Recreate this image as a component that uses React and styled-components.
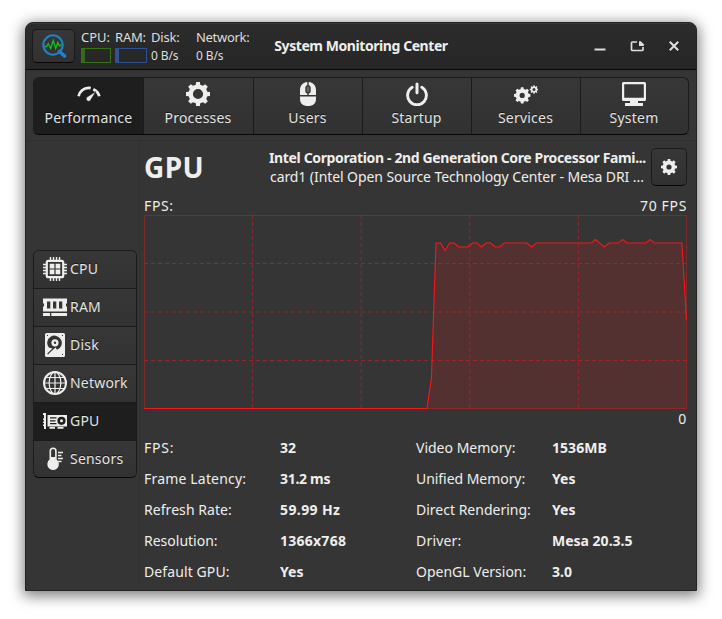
import React from "react";
import styled, { createGlobalStyle } from "styled-components";

const GlobalStyle = createGlobalStyle`
  *, *::before, *::after { box-sizing: border-box; }
  html, body { margin: 0; height: 100%; background: #fff; overflow: hidden; }
  body { font-family: "Noto Sans", sans-serif; font-size: 14px; color: #eeeeec; }
  svg { display: block; flex: none; }
`;

const Desktop = styled.main`
  width: 722px;
  height: 619px;
  padding: 22px 25px 28px;
`;

const Window = styled.section`
  width: 672px;
  height: 569px;
  display: flex;
  flex-direction: column;
  background: #353535;
  border: 1px solid #242424;
  border-radius: 8px 8px 0 0;
  box-shadow: 0 3px 14px 2px rgba(0, 0, 0, 0.5);
  overflow: hidden;
`;

const TitleBar = styled.header`
  height: 47px;
  flex: none;
  display: grid;
  grid-template-columns: 1fr auto 1fr;
  align-items: center;
  background: linear-gradient(#2c2c2c, #262626);
  border-bottom: 1px solid #070707;
  box-shadow: inset 0 1px #393939;
  padding: 0 6px;
`;

const Widgets = styled.div`
  display: flex;
  align-items: center;
`;

const raised = `
  background: linear-gradient(#373737, #313131);
  border: 1px solid #1b1b1b;
  border-bottom-color: #070707;
`;

const RaisedButton = styled.button`
  ${raised}
  border-radius: 5px;
  display: flex;
  align-items: center;
  justify-content: center;
  padding: 0;
  color: #eeeeec;
  width: ${(p) => p.$w}px;
  height: ${(p) => p.$h}px;
  flex: none;
`;

const Meter = styled.div`
  width: ${(p) => p.$w}px;
  margin-left: ${(p) => p.$gap}px;
  height: 36px;
  font-size: 13px;
  line-height: 18px;
  letter-spacing: ${(p) => p.$ls || 0}px;
  white-space: nowrap;
  color: #dededc;
`;

const MeterBar = styled.div`
  height: 15px;
  margin-top: 2px;
  border: 1px solid ${(p) => p.$line};
  background: linear-gradient(90deg, ${(p) => p.$fill} 3px, transparent 3px);
`;

const MeterRate = styled.div`
  font-size: 12px;
  line-height: 20px;
  letter-spacing: -0.1px;
`;

const WindowTitle = styled.h1`
  margin: 0;
  font-size: 14px;
  font-weight: 700;
  letter-spacing: -0.43px;
  line-height: 20px;
`;

const Controls = styled.div`
  display: flex;
  justify-content: flex-end;
  gap: 13px;
  padding-right: 4px;
`;

const ControlButton = styled.button`
  width: 24px;
  height: 24px;
  padding: 4px;
  border: 0;
  background: none;
  color: #dededc;
`;

const Tabs = styled.nav`
  ${raised}
  flex: none;
  height: 58px;
  margin: 7px 7px 0;
  display: grid;
  grid-template-columns: 109px 110px 109px 109px 109px 1fr;
  border-radius: 6px;
  overflow: hidden;
`;

const Tab = styled.button`
  border: 0;
  border-left: 1px solid #1b1b1b;
  background: ${(p) => (p.$active ? "#1e1e1e" : "none")};
  color: #e4e4e2;
  font: inherit;
  line-height: 20px;
  letter-spacing: 0.22px;
  padding: 4px 1px 0 0;
  display: flex;
  flex-direction: column;
  align-items: center;
  justify-content: flex-start;
  gap: 2px;
  text-shadow: 0 -1px rgba(0, 0, 0, 0.6);
  &:first-child { border-left: 0; padding-right: 0; }
`;

const Body = styled.div`
  flex: 1;
  display: flex;
  margin-top: 5px;
  border-top: 1px solid #303030;
`;

const SideColumn = styled.div`
  width: 114px;
  flex: none;
  padding: 109px 2px 0 7px;
  margin: 0 0 7px;
  border-right: 1px solid #303030;
`;

const SideList = styled.nav`
  ${raised}
  border-radius: 6px;
  overflow: hidden;
  display: grid;
  grid-template-rows: 37px repeat(4, 38px) 37px;
`;

const SideItem = styled.button`
  display: flex;
  align-items: center;
  gap: 3px;
  padding: 0 0 1px 9px;
  border: 0;
  border-top: 1px solid #1b1b1b;
  background: ${(p) => (p.$active ? "#1e1e1e" : "linear-gradient(#373737, #323232)")};
  color: #e4e4e2;
  font: inherit;
  letter-spacing: 0.2px;
  line-height: 20px;
  text-shadow: 0 -1px rgba(0, 0, 0, 0.6);
  &:first-child { border-top: 0; }
`;

const Panel = styled.section`
  flex: 1;
  min-width: 0;
  padding: 7px 9px 0 4px;
`;

const PanelHead = styled.div`
  display: flex;
  height: 38px;
  align-items: center;
`;

const Heading = styled.h2`
  margin: 0;
  width: 125px;
  font-size: 28px;
  line-height: 38px;
  letter-spacing: 0.4px;
`;

const Device = styled.div`
  width: 378px;
  margin-right: 4px;
  white-space: nowrap;
  line-height: 19px;
`;

const DeviceName = styled.div`
  font-weight: 700;
  letter-spacing: -0.36px;
`;

const DeviceCard = styled.div`
  letter-spacing: -0.08px;
  padding-left: 1px;
`;

const ChartCaption = styled.div`
  display: flex;
  justify-content: ${(p) => (p.$end ? "flex-end" : "space-between")};
  line-height: 19px;
  letter-spacing: 0.65px;
  margin-top: ${(p) => (p.$end ? 0 : 10)}px;
`;

const Stats = styled.dl`
  margin: 4px 0 0;
  display: grid;
  grid-template-columns: 136px 136px 136px 1fr;
  grid-auto-rows: 31px;
  align-items: center;
  line-height: 20px;
  white-space: nowrap;
`;

const StatName = styled.dt`
  letter-spacing: ${(p) => p.$ls}px;
`;

const StatValue = styled.dd`
  margin: 0;
  font-weight: 700;
  letter-spacing: ${(p) => p.$ls}px;
`;

/* ---------- icons ---------- */

function gearPath(cx, cy, outer, inner, hole, teeth = 8) {
  const step = (Math.PI * 2) / teeth;
  const pt = (r, a) => `${(cx + r * Math.cos(a)).toFixed(2)} ${(cy + r * Math.sin(a)).toFixed(2)}`;
  let d = "";
  for (let i = 0; i < teeth; i++) {
    const a = i * step;
    d += `${i ? "L" : "M"}${pt(inner, a - step * 0.3)}L${pt(outer, a - step * 0.2)}L${pt(outer, a + step * 0.2)}L${pt(inner, a + step * 0.3)}`;
  }
  return `${d}ZM${cx + hole} ${cy}a${hole} ${hole} 0 1 0 ${-2 * hole} 0a${hole} ${hole} 0 1 0 ${2 * hole} 0Z`;
}

const Icon = ({ size = 24, box = 24, children }) => (
  <svg width={size} height={size} viewBox={`0 0 ${box} ${box}`} fill="none" stroke="none">
    {children}
  </svg>
);
const C = "#eeeeec";

const LogoIcon = () => (
  <Icon size={26} box={26}>
    <path d="M18.5 18.500L23.500 23" stroke="#2581c4" strokeWidth="3.600" strokeLinecap="round" />
    <circle cx="12" cy="12" r="9.700" stroke="#1f80c5" strokeWidth="2.100" />
    <path d="M3.500 13.500H5.500L7.300 10.500 9.700 15.500 12.200 7.500 14.700 15.500 16.800 9.500 18.500 13 20.500 11.500" stroke="#0fc024" strokeWidth="1.300" />
  </Icon>
);
const GaugeIcon = () => (
  <Icon>
    <path d="M1.600 14.200C2.500 9.300 6.800 5.900 11.500 5.900c.8 0 1.500.1 2.200.3M16.300 7.200c3.200 1.500 5.300 4 6 7" stroke={C} strokeWidth="2.800" />
    <path d="M18.900 9.500L13.800 17.800a2.400 2.400 0 1 1-3.700-2.800Z" fill={C} stroke="#1e1e1e" strokeWidth=".6" />
  </Icon>
);
const GearIcon = () => (
  <Icon><path fillRule="evenodd" fill={C} d={gearPath(12, 12, 12.2, 9.6, 5.1)} /></Icon>
);
const SmallGearIcon = () => (
  <Icon size={16} box={16}><path fillRule="evenodd" fill={C} d={gearPath(8, 8, 8.2, 6.4, 2.6)} /></Icon>
);
const MouseIcon = () => (
  <Icon>
    <path fill={C} d="M11.300 0v3.300C10 3.600 9.300 4.500 9.300 6v3c0 1.500.7 2.200 2 2.500V13H4V8C4 3.500 7 .3 11.300 0ZM12.700 0C17 .3 20 3.500 20 8v5h-7.300v-1.500c1.300-.3 2-1 2-2.500V6c0-1.500-.7-2.400-2-2.700ZM4 14.500h16V17c0 4.500-3 7-8 7s-8-2.500-8-7Z" />
    <rect x="10.600" y="4.400" width="2.800" height="5.800" rx="1.400" fill={C} opacity=".25" />
  </Icon>
);
const PowerIcon = () => (
  <Icon>
    <path d="M7.200 5.300A9.400 9.400 0 1 0 16.800 5.300" stroke={C} strokeWidth="2.900" strokeLinecap="round" />
    <path d="M12 2v8.800" stroke={C} strokeWidth="3" strokeLinecap="round" />
  </Icon>
);
const GearsIcon = () => (
  <Icon>
    <path fillRule="evenodd" fill={C} d={gearPath(8.2, 13.4, 8.3, 6.6, 2.6)} />
    <path fillRule="evenodd" fill={C} d={gearPath(20, 7.5, 4.3, 3.2, 1.5)} />
  </Icon>
);
const ScreenIcon = () => (
  <Icon>
    <path fillRule="evenodd" fill={C} d="M1.500 0h21A1.500 1.500 0 0 1 24 1.500v16a1.500 1.500 0 0 1-1.500 1.500H16v2h5v3H3v-3h5v-2H1.500A1.500 1.500 0 0 1 0 17.500v-16A1.500 1.500 0 0 1 1.500 0ZM2.200 2.200v13.600h19.600V2.200Z" />
  </Icon>
);
const ChipIcon = () => (
  <Icon>
    <path d="M7.500 0v24M10.500 0v24M13.500 0v24M16.500 0v24M0 7.500h24M0 10.500h24M0 13.500h24M0 16.500h24" stroke={C} strokeWidth="1.400" />
    <rect x="3.800" y="3.800" width="16.400" height="16.400" rx="1.500" fill="#343434" stroke={C} strokeWidth="2.200" />
    <path fill={C} d="M6.700 6.700h4.700v4.700H6.700ZM12.600 6.700h4.700v4.700h-4.700ZM6.700 12.600h4.700v4.700H6.700ZM12.600 12.600h4.700v4.700h-4.700Z" />
  </Icon>
);
const RamIcon = () => (
  <Icon>
    <path fillRule="evenodd" fill={C} d="M0 3.500h24V8l-1 1v2l1 1v4.500H0V12l1-1V9L0 8ZM4 6.500v7h3.300v-7ZM10 6.500v7h3.300v-7ZM16 6.500v7h3.300v-7ZM0 18h7v3H0ZM8.300 18H24v3H8.300Z" />
  </Icon>
);
const DiskIcon = () => (
  <Icon>
    <rect x="2" width="20" height="24" rx="1.500" fill={C} />
    <path d="M5.800 14.500A7.300 7.300 0 1 1 14 16.800L12.500 14.500 7.500 19 5 21.500 4.200 20.500 9.500 15.500Z" fill="#343434" />
    <circle cx="12" cy="9.800" r="3.600" fill={C} />
    <circle cx="12" cy="9.800" r="1.200" fill="#343434" />
    <path d="M4 2.500h1M19 2.500h1M19 21.500h1" stroke="#343434" />
  </Icon>
);
const GlobeIcon = () => (
  <Icon>
    <circle cx="12" cy="12" r="11" stroke={C} strokeWidth="2" />
    <ellipse cx="12" cy="12" rx="5.800" ry="11" stroke={C} strokeWidth="1.200" />
    <path d="M12 1v22M1 12h22M3 6.500h18M3 17.500h18" stroke={C} strokeWidth="1.200" />
  </Icon>
);
const CardIcon = () => (
  <Icon>
    <path fill={C} d="M0 4h3v16H1v-3H0v-1.500h1V14H0v-1.500h1V11H0V9.500h1V6H0Z" />
    <path fillRule="evenodd" fill={C} d="M4.500 6H24v11.500H4.500ZM7 8.300v1.200h6.500V8.300ZM7 11.200v1.200h5.500v-1.200ZM7 14.100v1.200h6.500v-1.200ZM22.600 11.800a4.100 4.100 0 1 0-8.200 0a4.100 4.100 0 1 0 8.200 0Z" />
    <circle cx="18.500" cy="11.800" r="1.500" fill={C} />
    <path d="M6.500 18.800h5.500M14.500 18.800h6" stroke={C} strokeWidth="1.800" />
  </Icon>
);
const ThermometerIcon = () => (
  <Icon>
    <path d="M7.300 13V4a2.800 2.800 0 0 1 5.600 0v9a5 5 0 1 1-5.600 0Z" stroke={C} strokeWidth="1.600" />
    <circle cx="10.100" cy="17.800" r="5" fill={C} />
    <path d="M10.100 10v7" stroke={C} strokeWidth="5" />
    <path d="M15 5.500h5M15 8.500h3.500M15 11.500h5M15 14.500h3.500" stroke={C} strokeWidth="1.500" />
  </Icon>
);

/* ---------- chart ---------- */

const MAX = 70;
const SAMPLES = 120;
const START = 63;
const readings = {
  63: 11, 66: 57.3, 69: 58.6, 70: 58.6, 71: 58.6, 74: 58.6, 75: 60, 77: 58.6, 78: 58.6,
  85: 58.6, 99: 61.3, 101: 58.6, 105: 61.3, 111: 61.3, 119: 32,
};
const fps = Array.from({ length: SAMPLES }, (_, i) => (i < START ? 0 : readings[i] ?? 60));

function FpsChart() {
  const w = 543;
  const h = 194;
  const xs = (i) => 0.5 + (i * (w - 1)) / (SAMPLES - 1);
  const ys = (v) => h - 0.5 - (v / MAX) * (h - 1);
  const line = fps.map((v, i) => `${xs(i).toFixed(2)},${ys(v).toFixed(2)}`).join(" ");
  return (
    <svg width={w} height={h} viewBox={`0 0 ${w} ${h}`}>
      <g stroke="#ff1a1c" strokeOpacity="0.45" fill="none">
        <rect x=".5" y=".5" width={w - 1} height={h - 1} strokeOpacity="0.35" />
        {[1, 2, 3, 4].map((i) => (
          <path key={i} strokeDasharray="4 3" d={`M${(i * w) / 5} 0V${h}`} />
        ))}
        {[1, 2, 3].map((i) => (
          <path key={i} strokeDasharray="4 3" d={`M0 ${(i * h) / 4}H${w}`} />
        ))}
      </g>
      <polygon points={`${line} ${w - 0.5},${h} 0,${h}`} fill="#ff1a1c" fillOpacity="0.15" />
      <polyline points={line} fill="none" stroke="#fb1519" strokeWidth="1.100" />
    </svg>
  );
}

/* ---------- data ---------- */

const tabs = [
  ["Performance", GaugeIcon],
  ["Processes", GearIcon],
  ["Users", MouseIcon],
  ["Startup", PowerIcon],
  ["Services", GearsIcon],
  ["System", ScreenIcon],
];

const sideItems = [
  ["CPU", ChipIcon],
  ["RAM", RamIcon],
  ["Disk", DiskIcon],
  ["Network", GlobeIcon],
  ["GPU", CardIcon],
  ["Sensors", ThermometerIcon],
];

/* name, name spacing, value, value spacing */
const stats = [
  ["FPS:", 0.8, "32", 0], ["Video Memory:", 0, "1536MB", 0.05],
  ["Frame Latency:", 0.18, "31.2 ms", -0.3], ["Unified Memory:", -0.05, "Yes", 0],
  ["Refresh Rate:", 0.06, "59.99 Hz", 0.4], ["Direct Rendering:", 0, "Yes", 0],
  ["Resolution:", 0, "1366x768", 0.25], ["Driver:", 0.2, "Mesa 20.3.5", 0],
  ["Default GPU:", 0.1, "Yes", 0], ["OpenGL Version:", 0, "3.0", 0],
];

export default function App() {
  return (
    <Desktop>
      <GlobalStyle />
      <Window>
        <TitleBar>
          <Widgets>
            <RaisedButton $w={43} $h={34}><LogoIcon /></RaisedButton>
            <Meter $w={30} $gap={6}>CPU:<MeterBar $line="#34750f" $fill="#356a1c" /></Meter>
            <Meter $w={32} $gap={4} $ls={-0.2}>RAM:<MeterBar $line="#2f4f94" $fill="#37538f" /></Meter>
            <Meter $w={41} $gap={4} $ls={-0.2}>Disk:<MeterRate>0 B/s</MeterRate></Meter>
            <Meter $w={56} $gap={4} $ls={-0.3}>Network:<MeterRate>0 B/s</MeterRate></Meter>
          </Widgets>
          <WindowTitle>System Monitoring Center</WindowTitle>
          <Controls>
            <ControlButton>
              <Icon size={16} box={16}><path d="M2.500 11.500h11" stroke="currentColor" strokeWidth="2" /></Icon>
            </ControlButton>
            <ControlButton>
              <Icon size={16} box={16}>
                <path d="M8 4H3.500a1 1 0 0 0-1 1v6.500a1 1 0 0 0 1 1h9.500a1 1 0 0 0 1-1V9" stroke="currentColor" strokeWidth="1.700" />
                <path d="M10 3.200h1.800l3 3V8H10Z" fill="currentColor" />
              </Icon>
            </ControlButton>
            <ControlButton>
              <Icon size={16} box={16}><path d="M3.800 3.800l8.400 8.400M12.200 3.800l-8.400 8.400" stroke="currentColor" strokeWidth="2" /></Icon>
            </ControlButton>
          </Controls>
        </TitleBar>
        <Tabs>
          {tabs.map(([name, Glyph], i) => (
            <Tab key={name} $active={i === 0}><Glyph />{name}</Tab>
          ))}
        </Tabs>
        <Body>
          <SideColumn>
            <SideList>
              {sideItems.map(([name, Glyph]) => (
                <SideItem key={name} $active={name === "GPU"}><Glyph />{name}</SideItem>
              ))}
            </SideList>
          </SideColumn>
          <Panel>
            <PanelHead>
              <Heading>GPU</Heading>
              <Device>
                <DeviceName>Intel Corporation - 2nd Generation Core Processor Fami...</DeviceName>
                <DeviceCard>card1 (Intel Open Source Technology Center - Mesa DRI ...</DeviceCard>
              </Device>
              <RaisedButton $w={36} $h={38}><SmallGearIcon /></RaisedButton>
            </PanelHead>
            <ChartCaption><span>FPS:</span><span>70 FPS</span></ChartCaption>
            <FpsChart />
            <ChartCaption $end><span>0</span></ChartCaption>
            <Stats>
              {stats.map(([name, nameLs, value, valueLs]) => (
                <React.Fragment key={name}>
                  <StatName $ls={nameLs}>{name}</StatName>
                  <StatValue $ls={valueLs}>{value}</StatValue>
                </React.Fragment>
              ))}
            </Stats>
          </Panel>
        </Body>
      </Window>
    </Desktop>
  );
}
